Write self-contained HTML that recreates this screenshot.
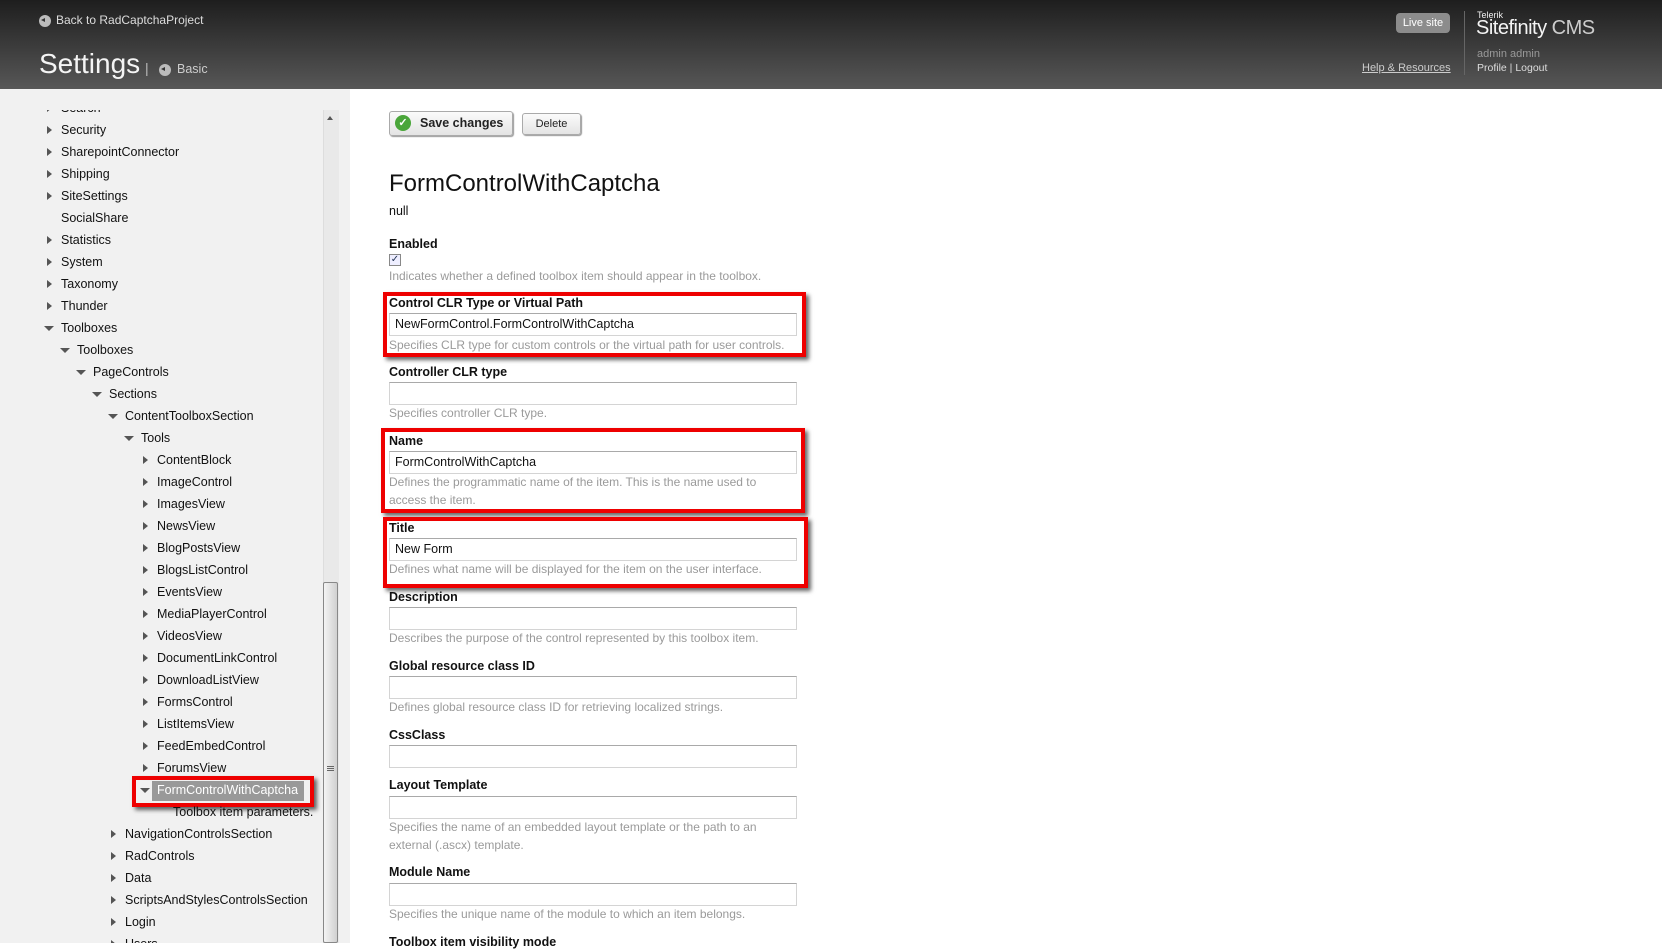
<!DOCTYPE html>
<html><head><meta charset="utf-8"><style>
*{margin:0;padding:0;box-sizing:border-box}
body{width:1662px;height:943px;overflow:hidden;background:#fff;font-family:"Liberation Sans",Arial,sans-serif;position:relative}
.a{position:absolute;white-space:nowrap}
#hd{position:absolute;left:0;top:0;width:1662px;height:89px;background:linear-gradient(#1e1e1e,#575757)}
#sb{position:absolute;left:0;top:89px;width:350px;height:854px;background:#f1f1f1}
#clip{position:absolute;left:0;top:110px;width:322px;height:833px;overflow:hidden}
#tree{position:absolute;left:0;top:-110px;width:322px;height:943px}
.r{position:absolute;height:22px;line-height:22px;font-size:12.5px;color:#111}
.ar{position:absolute;top:7px;width:0;height:0;border-top:4.5px solid transparent;border-bottom:4.5px solid transparent;border-left:5px solid #555}
.ad{position:absolute;top:9px;width:0;height:0;border-left:5px solid transparent;border-right:5px solid transparent;border-top:5px solid #555}
.lb{position:absolute;left:389px;font-size:12.5px;font-weight:bold;color:#111;white-space:nowrap}
.in{position:absolute;left:389px;width:408px;height:23px;border:1px solid #d4d4d4;border-top-color:#a9a9a9;background:#fff;font-size:12.5px;line-height:21px;padding-left:5px;color:#111}
.ds{position:absolute;left:389px;font-size:12px;color:#9a9a9a;white-space:nowrap;line-height:18px}
.rb{position:absolute;border:4px solid #e00;box-shadow:3px 3px 4px rgba(0,0,0,.6)}
.ic{display:inline-block;width:12px;height:12px;border-radius:50%;background:#bbb;vertical-align:middle;position:relative}
.ic:after{content:"";position:absolute;left:2px;top:3.5px;border-top:2.5px solid transparent;border-bottom:2.5px solid transparent;border-right:4px solid #333}
</style></head><body>
<div id="hd"></div>
<div class="a" style="left:39px;top:13px;font-size:12px;color:#ddd"><span class="ic" style="margin-right:5px"></span>Back to RadCaptchaProject</div>
<div class="a" style="left:39px;top:48px;font-size:28px;color:#f4f4f4">Settings</div>
<div class="a" style="left:145px;top:60px;font-size:14px;color:#bbb">|</div>
<div class="a" style="left:159px;top:62px;font-size:12.5px;color:#ccc"><span class="ic" style="margin-right:6px"></span>Basic</div>
<div class="a" style="left:1396px;top:13px;width:54px;height:20px;border-radius:4px;background:#8c8c8c;color:#fff;font-size:11px;line-height:20px;text-align:center">Live site</div>
<div class="a" style="left:1362px;top:62px;font-size:11px;color:#ccc;text-decoration:underline">Help &amp; Resources</div>
<div class="a" style="left:1464px;top:11px;width:1px;height:64px;background:#666"></div>
<div class="a" style="left:1477px;top:10px;font-size:9px;color:#eee">Telerik</div>
<div class="a" style="left:1476px;top:17px;font-size:20px;color:#f4f4f4;letter-spacing:-0.5px">Sitefinity<span style="color:#ccc"> CMS</span></div>
<div class="a" style="left:1477px;top:48px;font-size:11px;color:#999">admin admin</div>
<div class="a" style="left:1477px;top:62px;font-size:10.5px;color:#ddd">Profile | Logout</div>

<div id="sb"></div>
<div class="a" style="left:323px;top:110px;width:16px;height:833px;background:#e9e9e9;border-left:1px solid #ddd"></div>
<div class="a" style="left:327px;top:116px;border-left:3px solid transparent;border-right:3px solid transparent;border-bottom:4px solid #555"></div>
<div class="a" style="left:323px;top:582px;width:15px;height:361px;border:1px solid #888;border-radius:2px;background:linear-gradient(90deg,#f4f4f4,#d0d0d0)"></div>
<div class="a" style="left:327px;top:766px;width:7px;height:1px;border-top:1px solid #666;box-shadow:0 2px 0 #666,0 4px 0 #666"></div>

<div class="rb" style="left:132px;top:776px;width:182px;height:31px"></div>
<div class="a" style="left:152px;top:781px;width:152px;height:20px;background:#999"></div>
<div id="clip"><div id="tree"></div></div>
<script>
var it=[["Search",0,1],["Security",0,1],["SharepointConnector",0,1],["Shipping",0,1],["SiteSettings",0,1],["SocialShare",0,0],["Statistics",0,1],["System",0,1],["Taxonomy",0,1],["Thunder",0,1],["Toolboxes",0,2],["Toolboxes",1,2],["PageControls",2,2],["Sections",3,2],["ContentToolboxSection",4,2],["Tools",5,2],["ContentBlock",6,1],["ImageControl",6,1],["ImagesView",6,1],["NewsView",6,1],["BlogPostsView",6,1],["BlogsListControl",6,1],["EventsView",6,1],["MediaPlayerControl",6,1],["VideosView",6,1],["DocumentLinkControl",6,1],["DownloadListView",6,1],["FormsControl",6,1],["ListItemsView",6,1],["FeedEmbedControl",6,1],["ForumsView",6,1],["FormControlWithCaptcha",6,2],["Toolbox item parameters.",7,0],["NavigationControlsSection",4,1],["RadControls",4,1],["Data",4,1],["ScriptsAndStylesControlsSection",4,1],["Login",4,1],["Users",4,1]];
var h="";
for(var i=0;i<it.length;i++){var t=it[i],x=46+t[1]*16,y=97+22*i;
var c=(i==31)?"color:#fff;":"";
h+='<div class="r" style="left:0;top:'+y+'px;width:320px">';
if(t[2]==1)h+='<div class="ar" style="left:'+(x+1)+'px"></div>';
if(t[2]==2)h+='<div class="ad" style="left:'+(x-2)+'px"></div>';
h+='<div class="a" style="left:'+(x+15)+'px;'+c+'">'+t[0]+'</div></div>';}
document.getElementById("tree").innerHTML=h;
</script>

<div class="a" style="left:389px;top:111px;width:124px;height:25px;border:1px solid #aaa;border-radius:3px;background:linear-gradient(#fbfbfb,#e4e4e4);box-shadow:1px 1px 1px #999;font-size:12.5px;font-weight:bold;color:#222;line-height:23px;padding-left:30px">Save changes</div>
<div class="a" style="left:395px;top:115px;width:16px;height:16px;border-radius:50%;background:#4aa63a;color:#fff;font-size:11px;line-height:16px;text-align:center;font-weight:bold">✓</div>
<div class="a" style="left:522px;top:113px;width:59px;height:22px;border:1px solid #aaa;border-radius:3px;background:linear-gradient(#fbfbfb,#e4e4e4);box-shadow:1px 1px 1px #999;font-size:11px;color:#222;line-height:20px;text-align:center">Delete</div>

<div class="a" style="left:389px;top:170px;font-size:24px;color:#111">FormControlWithCaptcha</div>
<div class="a" style="left:389px;top:204px;font-size:12.5px;color:#111">null</div>

<div class="lb" style="top:237px">Enabled</div>
<div class="a" style="left:389px;top:254px;width:12px;height:12px;border:1px solid #888;background:#eef;font-size:10px;line-height:10px;color:#235;text-align:center">✓</div>
<div class="ds" style="top:267px">Indicates whether a defined toolbox item should appear in the toolbox.</div>

<div class="rb" style="left:383px;top:292px;width:423px;height:65px"></div>
<div class="lb" style="top:296px">Control CLR Type or Virtual Path</div>
<div class="in" style="top:313px">NewFormControl.FormControlWithCaptcha</div>
<div class="ds" style="top:336px">Specifies CLR type for custom controls or the virtual path for user controls.</div>

<div class="lb" style="top:365px">Controller CLR type</div>
<div class="in" style="top:382px"></div>
<div class="ds" style="top:404px">Specifies controller CLR type.</div>

<div class="rb" style="left:381px;top:428px;width:424px;height:85px"></div>
<div class="lb" style="top:434px">Name</div>
<div class="in" style="top:451px">FormControlWithCaptcha</div>
<div class="ds" style="top:473px">Defines the programmatic name of the item. This is the name used to</div>
<div class="ds" style="top:491px">access the item.</div>

<div class="rb" style="left:383px;top:517px;width:425px;height:71px"></div>
<div class="lb" style="top:521px">Title</div>
<div class="in" style="top:538px">New Form</div>
<div class="ds" style="top:560px">Defines what name will be displayed for the item on the user interface.</div>

<div class="lb" style="top:590px">Description</div>
<div class="in" style="top:607px"></div>
<div class="ds" style="top:629px">Describes the purpose of the control represented by this toolbox item.</div>

<div class="lb" style="top:659px">Global resource class ID</div>
<div class="in" style="top:676px"></div>
<div class="ds" style="top:698px">Defines global resource class ID for retrieving localized strings.</div>

<div class="lb" style="top:728px">CssClass</div>
<div class="in" style="top:745px"></div>

<div class="lb" style="top:778px">Layout Template</div>
<div class="in" style="top:796px"></div>
<div class="ds" style="top:818px">Specifies the name of an embedded layout template or the path to an</div>
<div class="ds" style="top:836px">external (.ascx) template.</div>

<div class="lb" style="top:865px">Module Name</div>
<div class="in" style="top:883px"></div>
<div class="ds" style="top:905px">Specifies the unique name of the module to which an item belongs.</div>

<div class="lb" style="top:935px">Toolbox item visibility mode</div>
</body></html>
